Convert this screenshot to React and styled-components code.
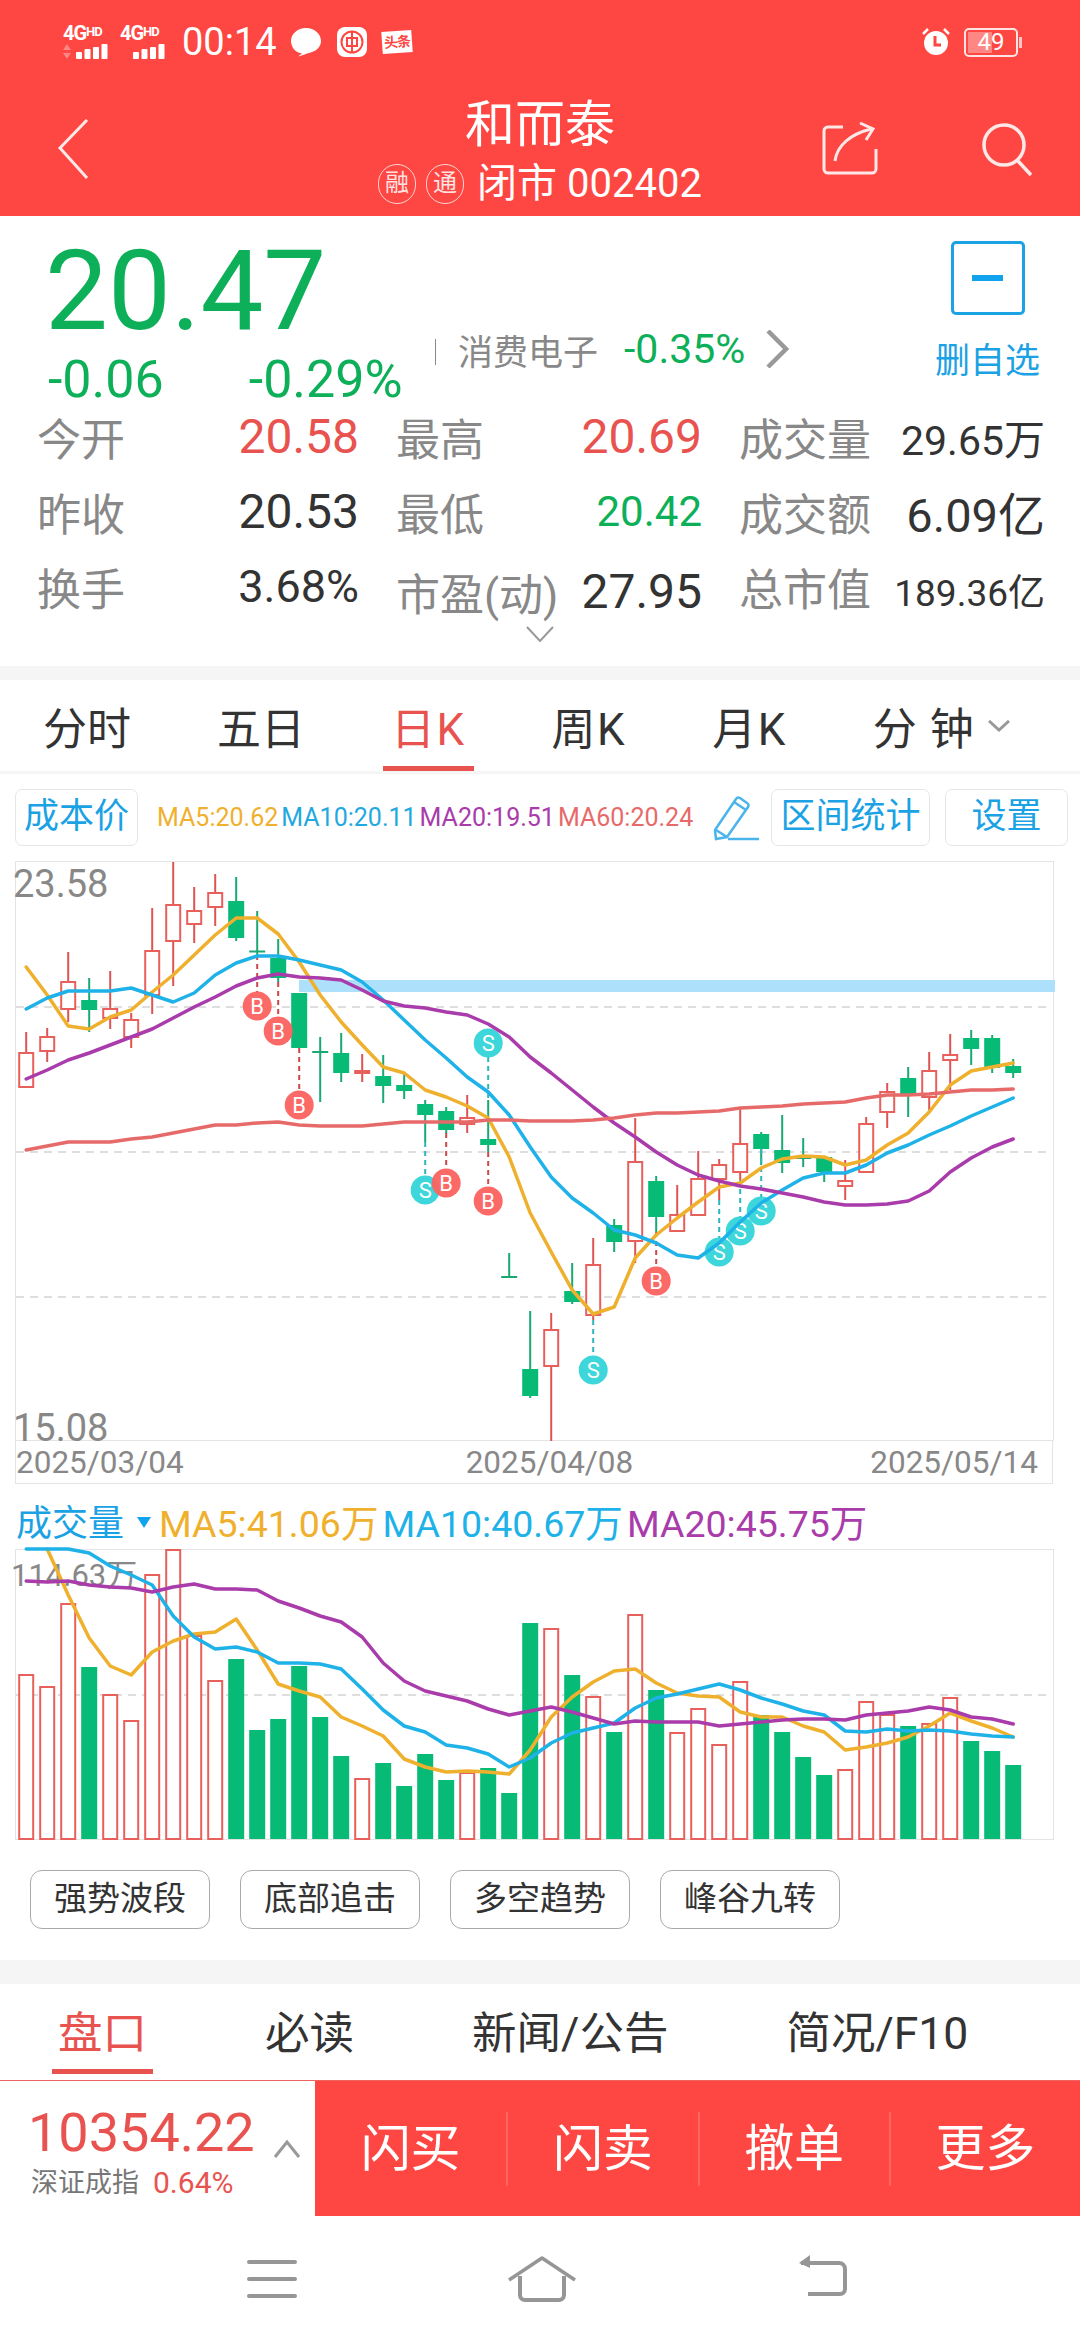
import React from "react";
import styled, { createGlobalStyle } from "styled-components";

const RED = "#fe4743";
const UP = "#e85350";
const DOWN = "#0db058";
const BLUE = "#1ba2e4";
const FONT = `Roboto, "Noto Sans CJK SC", sans-serif`;

const GlobalStyle = createGlobalStyle`
  html, body { margin: 0; padding: 0; background: #fff; }
  body { font-family: ${FONT}; }
  * { box-sizing: border-box; }
`;

const Page = styled.div`
  width: 1080px;
  height: 2340px;
  overflow: hidden;
  background: #fff;
  color: #333;
`;

/* header */
const Header = styled.header`
  height: 216px;
  background: ${RED};
  color: #fff;
`;

const StatusBar = styled.div`
  height: 84px;
  padding: 0 62px 0 63px;
  display: flex;
  align-items: center;
`;

const SignalGroup = styled.div`
  width: 46px;
  margin-right: 11px;
  display: flex;
  flex-direction: column;
  gap: 3px;
`;

const NetText = styled.span`
  font-size: 20px;
  line-height: 15px;
  font-weight: 700;
  white-space: nowrap;
  letter-spacing: -1px;
  & > sup {
    font-size: 13px;
    line-height: 0;
    vertical-align: 4px;
  }
`;

const Clock = styled.span`
  font-size: 38px;
  line-height: 40px;
  margin: 0 13px 0 5px;
`;

const BankIcon = styled.svg`
  margin-left: 15px;
`;

const TinyLogo = styled.span`
  width: 30px;
  height: 22px;
  margin-left: 15px;
  background: #fff;
  color: ${RED};
  font-size: 14px;
  line-height: 22px;
  font-weight: 700;
  text-align: center;
  transform: rotate(-4deg);
  letter-spacing: -1px;
  white-space: nowrap;
`;

const StatusRight = styled.div`
  margin-left: auto;
  display: flex;
  align-items: center;
  gap: 13px;
`;

const Battery = styled.div`
  position: relative;
  width: 54px;
  height: 29px;
  border: 2px solid #ffe4e3;
  border-radius: 5px;
  font-size: 24px;
  line-height: 25px;
  text-align: center;
  &::before {
    content: "";
    position: absolute;
    left: 2px;
    top: 2px;
    bottom: 2px;
    width: 47%;
    background: rgba(255, 255, 255, 0.35);
  }
  &::after {
    content: "";
    position: absolute;
    right: -6px;
    top: 7px;
    width: 3px;
    height: 11px;
    background: rgba(255, 255, 255, 0.7);
  }
`;

const NavBar = styled.div`
  height: 132px;
  padding: 0 44px;
  display: grid;
  grid-template-columns: 1fr auto 1fr;
`;

const NavSide = styled.div`
  display: flex;
  align-items: center;
  justify-content: ${(p) => (p.$right ? "flex-end" : "flex-start")};
  gap: ${(p) => (p.$right ? "101px" : "0")};
  padding: 0 0 2px ${(p) => (p.$right ? "0" : "14px")};
`;

const TitleColumn = styled.div`
  padding-top: 11px;
  text-align: center;
`;

const Title = styled.div`
  font-size: 50px;
  line-height: 60px;
`;

const SubTitle = styled.div`
  margin-top: 8px;
  height: 42px;
  display: flex;
  align-items: center;
  justify-content: center;
  font-size: 40px;
  line-height: 42px;
`;

const Badge = styled.span`
  width: 38px;
  height: 40px;
  margin-right: 10px;
  border: 1px solid rgba(255, 255, 255, 0.75);
  border-radius: 19px;
  font-size: 24px;
  line-height: 37px;
  text-align: center;
  color: #ffe3e2;
`;

const MarketState = styled.span`
  margin-left: 3px;
`;

/* quote */
const Quote = styled.section`
  height: 450px;
`;

const QuoteTop = styled.div`
  height: 183px;
  padding: 25px 40px 0 48px;
  display: flex;
`;

const PriceColumn = styled.div`
  width: 387px;
`;

const Price = styled.div`
  margin-left: -3px;
  font-size: 112px;
  line-height: 100px;
  color: ${DOWN};
`;

const ChangeRow = styled.div`
  margin-top: 10px;
  display: flex;
  gap: 85px;
  font-size: 52px;
  line-height: 58px;
  color: ${DOWN};
`;

const SectorRow = styled.div`
  margin-top: 87px;
  height: 42px;
  display: flex;
  align-items: center;
  font-size: 35px;
  color: #888;
`;

const Pipe = styled.span`
  width: 1px;
  height: 26px;
  margin: 6px 22px 0 0;
  background: #888;
`;

const SectorChange = styled.span`
  margin: 0 20px 0 26px;
  font-size: 41px;
  color: ${DOWN};
`;

const FavColumn = styled.div`
  margin-left: auto;
  width: 105px;
  display: flex;
  flex-direction: column;
  align-items: center;
`;

const FavBox = styled.div`
  width: 74px;
  height: 74px;
  border: 3px solid ${BLUE};
  border-radius: 5px;
  display: flex;
  align-items: center;
  justify-content: center;
  &::after {
    content: "";
    width: 31px;
    height: 6px;
    background: #12a3ee;
  }
`;

const FavLabel = styled.div`
  margin-top: 26px;
  font-size: 35px;
  line-height: 42px;
  color: ${BLUE};
  white-space: nowrap;
`;

const StatGrid = styled.div`
  padding-left: 37px;
  display: grid;
  grid-template-columns: 322px 306px 306px;
  grid-auto-rows: 75px;
  column-gap: 37px;
`;

const Stat = styled.div`
  display: flex;
  align-items: center;
  justify-content: space-between;
  white-space: nowrap;
`;

const StatLabel = styled.span`
  font-size: 44px;
  color: #888;
  transform: translateY(${(p) => p.$shift || 0}px);
`;

const StatValue = styled.span`
  font-size: ${(p) => p.$size || 48}px;
  color: ${(p) => p.$color || "#333"};
  transform: translateY(${(p) => p.$shift || 0}px);
`;

const MoreRow = styled.div`
  display: flex;
  justify-content: center;
  padding: 2px 0 0 0;
  height: 20px;
`;

const Stripe = styled.div`
  height: ${(p) => p.$h}px;
  background: #f5f5f5;
`;

/* tabs */
const TabBar = styled.nav`
  height: ${(p) => p.$h}px;
  padding-left: ${(p) => p.$left}px;
  display: flex;
  gap: ${(p) => p.$gap}px;
  font-size: ${(p) => p.$size}px;
`;

const Tab = styled.div`
  position: relative;
  height: 100%;
  display: flex;
  align-items: center;
  white-space: nowrap;
  letter-spacing: ${(p) => p.$spread || 0}px;
  color: ${(p) => (p.$active ? UP : "#333")};
  ${(p) =>
    p.$active &&
    `&::after {
      content: "";
      position: absolute;
      left: -${p.$under}px;
      right: -${p.$under}px;
      bottom: 0;
      height: 5px;
      background: ${UP};
    }`}
`;

const Caret = styled.svg`
  margin-left: 13px;
`;

/* chart toolbar */
const Toolbar = styled.div`
  height: 87px;
  padding: 15px 12px 15px 15px;
  display: flex;
  align-items: center;
`;

const ToolChip = styled.div`
  width: ${(p) => p.$w}px;
  height: 57px;
  margin-left: ${(p) => p.$ml || 0}px;
  border: 1px solid #e6e6e6;
  border-radius: 7px;
  font-size: 35px;
  line-height: 53px;
  text-align: center;
  color: ${BLUE};
  white-space: nowrap;
`;

const Legend = styled.div`
  margin-left: ${(p) => p.$ml}px;
  display: flex;
  gap: ${(p) => p.$gap}px;
  font-size: ${(p) => p.$size}px;
  white-space: nowrap;
`;

const LegendItem = styled.span`
  color: ${(p) => p.$color};
`;

const PenIcon = styled.svg`
  margin: 0 12px 0 auto;
`;

const ChartBox = styled.div`
  position: relative;
  width: 1039px;
  height: ${(p) => p.$h}px;
  margin-left: 15px;
  border: 1px solid #e4e4e4;
`;

const AxisLabel = styled.span`
  position: absolute;
  left: ${(p) => p.$left}px;
  top: ${(p) => p.$top}px;
  font-size: ${(p) => p.$size}px;
  line-height: 1;
  color: #888;
  white-space: nowrap;
`;

const ChartSvg = styled.svg`
  position: absolute;
  left: -1px;
  top: -1px;
  overflow: visible;
`;

const DateRow = styled.div`
  width: 1038px;
  height: 43px;
  margin-left: 15px;
  border: 1px solid #e4e4e4;
  border-top: 0;
  display: flex;
  align-items: center;
  font-size: 31.5px;
  color: #888;
`;

const DateLabel = styled.span`
  margin-left: ${(p) => p.$ml || 0}px;
`;

const VolumeHead = styled.div`
  height: 65px;
  padding: 7px 0 0 16px;
  display: flex;
  align-items: center;
  white-space: nowrap;
`;

const VolumeTitle = styled.span`
  font-size: 36px;
  color: ${BLUE};
`;

const VolumeArrow = styled.span`
  width: 0;
  height: 0;
  margin: 4px 8px 0 13px;
  border-left: 7px solid transparent;
  border-right: 7px solid transparent;
  border-top: 11px solid #12a3ee;
`;

const StrategyRow = styled.div`
  padding: 30px 0 31px 30px;
  display: flex;
  gap: 30px;
`;

const StrategyChip = styled.div`
  width: 180px;
  height: 59px;
  border: 1px solid #aaa;
  border-radius: 12px;
  font-size: 33px;
  line-height: 55px;
  text-align: center;
`;

/* bottom */
const TradeBar = styled.div`
  height: 136px;
  margin-top: 6px;
  border-top: 1px solid #f0625f;
  display: flex;
`;

const IndexPanel = styled.div`
  width: 315px;
  padding: 25px 0 0 28px;
  position: relative;
`;

const IndexValue = styled.div`
  font-size: 54px;
  line-height: 54px;
  color: ${UP};
`;

const IndexRow = styled.div`
  margin-top: 5px;
  padding-left: 3px;
  display: flex;
  align-items: center;
  gap: 14px;
  font-size: 27px;
  line-height: 36px;
  color: #777;
`;

const IndexChange = styled.span`
  font-size: 30px;
  color: ${UP};
`;

const UpCaret = styled.svg`
  position: absolute;
  left: 274px;
  top: 59px;
`;

const ActionRow = styled.div`
  flex: 1;
  background: ${RED};
  display: grid;
  grid-template-columns: repeat(4, 1fr);
  align-items: center;
`;

const ActionButton = styled.div`
  height: 74px;
  border-left: ${(p) => (p.$first ? "0" : "2px solid rgba(255,255,255,0.17)")};
  font-size: 50px;
  line-height: 74px;
  text-align: center;
  color: #fff;
`;

const SystemNav = styled.div`
  height: 126px;
  padding: 38px 232px 0 247px;
  display: flex;
  justify-content: space-between;
  align-items: flex-start;
`;

const MenuIcon = styled.svg`
  margin-top: 5px;
`;

const HomeIcon = styled.svg`
  margin: 2px 12px 0 0;
`;

/* chart data: x position of a bar, prices are page y values */
const barX = (i) => 26.2 + 21 * i;

// kind, wick top, body top, body bottom, wick bottom
const CANDLES = [
  ["r", 1032, 1053, 1087, 1087], ["r", 1028, 1037, 1051, 1062], ["r", 952, 982, 1009, 1022],
  ["g", 978, 1000, 1010, 1032], ["r", 971, 1009, 1018, 1029], ["r", 1013, 1020, 1037, 1048],
  ["r", 908, 951, 995, 1014], ["r", 862, 905, 941, 986], ["r", 887, 911, 924, 943],
  ["r", 874, 893, 907, 926], ["g", 877, 901, 938, 941], ["g", 911, 950.5, 952.5, 955],
  ["g", 939, 958, 978, 982], ["g", 993, 993, 1048, 1048], ["g", 1037, 1051, 1053, 1102],
  ["g", 1033, 1053, 1073, 1082], ["r", 1054, 1071, 1073, 1082], ["g", 1055, 1076, 1086, 1103],
  ["g", 1073, 1085, 1091, 1099], ["g", 1100, 1104, 1115, 1142], ["g", 1107, 1111, 1130, 1133],
  ["r", 1095, 1118, 1124, 1133], ["g", 1100, 1139, 1145, 1152], ["g", 1253, 1276, 1278, 1278],
  ["g", 1311, 1369, 1396, 1398], ["r", 1313, 1330, 1366, 1441], ["g", 1263, 1291, 1302, 1304],
  ["r", 1238, 1265, 1315, 1320], ["g", 1219, 1225, 1242, 1252], ["r", 1118, 1162, 1241, 1263],
  ["g", 1176, 1181, 1217, 1232], ["r", 1185, 1215, 1231, 1231], ["r", 1151, 1179, 1215, 1215],
  ["r", 1159, 1165, 1179, 1200], ["r", 1107, 1144, 1172, 1180], ["g", 1132, 1134, 1149, 1165],
  ["g", 1115, 1150, 1163, 1173], ["g", 1138, 1156, 1159, 1167], ["g", 1157, 1157, 1172, 1182],
  ["r", 1160, 1181, 1186, 1200], ["r", 1117, 1124, 1172, 1172], ["r", 1083, 1092, 1112, 1128],
  ["g", 1067, 1078, 1094, 1117], ["r", 1052, 1071, 1097, 1110], ["r", 1034, 1055, 1060, 1090],
  ["g", 1030, 1038, 1049, 1065], ["g", 1035, 1038, 1068, 1073], ["g", 1059, 1066, 1073, 1078],
];

// letter, bar index, centre y, dashed line from, dashed line to
const MARKERS = [
  ["B", 11, 1006, 955, 992], ["B", 12, 1031, 982, 1017], ["B", 13, 1105, 1048, 1091],
  ["S", 19, 1190, 1142, 1176], ["B", 20, 1183, 1133, 1169], ["B", 22, 1201, 1152, 1187],
  ["S", 22, 1043, 1057, 1100], ["S", 27, 1370, 1320, 1356], ["B", 30, 1281, 1232, 1267],
  ["S", 33, 1252, 1200, 1238], ["S", 34, 1231, 1180, 1217], ["S", 35, 1211, 1149, 1197],
];

const PRICE_MA = [
  {
    color: "#efb02e",
    ys: [967, 995, 1026, 1029, 1017, 1010, 992, 975, 955, 935, 918, 918, 934, 962, 995, 1022, 1045, 1067, 1073, 1090, 1097, 1106, 1118, 1157, 1213, 1252, 1290, 1314, 1307, 1258, 1235, 1218, 1202, 1187, 1183, 1168, 1159, 1156, 1157, 1165, 1160, 1145, 1133, 1112, 1085, 1071, 1067, 1063],
  },
  {
    color: "#1fb2e8",
    ys: [1009, 998, 991, 991, 991, 988, 995, 1002, 993, 975, 963, 956, 956, 960, 965, 970, 982, 1000, 1020, 1040, 1058, 1077, 1092, 1115, 1147, 1177, 1198, 1213, 1230, 1235, 1243, 1255, 1258, 1243, 1222, 1203, 1190, 1178, 1173, 1173, 1165, 1153, 1145, 1135, 1126, 1116, 1107, 1098],
  },
  {
    color: "#a93bab",
    ys: [1079, 1070, 1060, 1053, 1045, 1037, 1029, 1018, 1007, 997, 986, 978, 974, 977, 978, 980, 990, 1001, 1006, 1008, 1012, 1015, 1024, 1037, 1057, 1073, 1090, 1107, 1123, 1137, 1152, 1165, 1175, 1181, 1186, 1189, 1193, 1197, 1202, 1205, 1205, 1204, 1201, 1191, 1172, 1158, 1147, 1139],
  },
  {
    color: "#e76a6a",
    ys: [1150, 1146, 1142, 1142, 1142, 1139, 1137, 1133, 1129, 1125, 1125, 1123, 1122, 1125, 1126, 1126, 1126, 1124, 1122, 1122, 1122, 1122, 1120, 1120, 1121, 1121, 1121, 1120, 1118, 1115, 1113, 1113, 1112, 1111, 1108, 1107, 1106, 1104, 1103, 1102, 1098, 1095, 1095, 1094, 1092, 1090, 1090, 1089],
  },
];

const VOLUMES = [
  ["r", 1675], ["r", 1687], ["r", 1604], ["g", 1667], ["r", 1695], ["r", 1721], ["r", 1575], ["r", 1550],
  ["r", 1636], ["r", 1681], ["g", 1659], ["g", 1730], ["g", 1719], ["g", 1666], ["g", 1717], ["g", 1756],
  ["r", 1779], ["g", 1763], ["g", 1786], ["g", 1754], ["g", 1780], ["r", 1773], ["g", 1768], ["g", 1793],
  ["g", 1623], ["r", 1629], ["g", 1675], ["r", 1697], ["g", 1732], ["r", 1615], ["g", 1690], ["r", 1733],
  ["r", 1709], ["r", 1745], ["r", 1682], ["g", 1715], ["g", 1732], ["g", 1757], ["g", 1775], ["r", 1770],
  ["r", 1702], ["r", 1715], ["g", 1726], ["r", 1724], ["r", 1698], ["g", 1741], ["g", 1751], ["g", 1765],
];

const VOLUME_MA = [
  {
    color: "#efb02e",
    from: 1,
    ys: [1549, 1595, 1638, 1666, 1675, 1652, 1641, 1634, 1632, 1619, 1650, 1684, 1691, 1697, 1717, 1726, 1736, 1759, 1767, 1772, 1771, 1772, 1774, 1750, 1717, 1697, 1682, 1671, 1669, 1683, 1693, 1696, 1697, 1712, 1717, 1717, 1726, 1732, 1750, 1747, 1743, 1737, 1726, 1713, 1721, 1728, 1737],
  },
  {
    color: "#1fb2e8",
    from: 0,
    ys: [1549, 1549, 1549, 1553, 1566, 1575, 1585, 1616, 1637, 1649, 1647, 1652, 1663, 1663, 1664, 1669, 1689, 1710, 1726, 1732, 1745, 1748, 1754, 1767, 1758, 1743, 1733, 1728, 1723, 1708, 1698, 1694, 1689, 1684, 1690, 1698, 1704, 1711, 1715, 1731, 1732, 1729, 1731, 1730, 1731, 1734, 1736, 1737],
  },
  {
    color: "#a93bab",
    from: 0,
    ys: [1581, 1582, 1581, 1585, 1587, 1588, 1592, 1587, 1584, 1589, 1589, 1590, 1601, 1608, 1616, 1622, 1637, 1663, 1681, 1691, 1696, 1701, 1709, 1715, 1711, 1707, 1712, 1718, 1724, 1721, 1722, 1722, 1722, 1726, 1724, 1722, 1720, 1719, 1719, 1720, 1715, 1713, 1711, 1707, 1710, 1717, 1719, 1724],
  },
];

const STROKE_RED = "#e8605c";
const BODY_GREEN = "#07ba76";
const WICK_GREEN = "#1aa873";

const MaLine = ({ ys, color, from = 0 }) => (
  <polyline
    points={ys.map((y, i) => `${barX(i + from)},${y}`).join(" ")}
    fill="none"
    stroke={color}
    strokeWidth="3.5"
    strokeLinejoin="round"
    strokeLinecap="round"
  />
);

const Candle = ({ data, i }) => {
  const [kind, top, bodyTop, bodyBottom, bottom] = data;
  const x = barX(i);
  const wick = kind === "g" ? WICK_GREEN : "#de5452";
  return (
    <g>
      <line x1={x} x2={x} y1={top} y2={bottom} stroke={wick} strokeWidth="2" />
      {kind === "g" ? (
        <rect x={x - 8} y={bodyTop} width="16" height={bodyBottom - bodyTop} fill={bodyBottom - bodyTop < 4 ? wick : BODY_GREEN} />
      ) : (
        <rect x={x - 7} y={bodyTop} width="14" height={bodyBottom - bodyTop} fill="#fff" stroke={STROKE_RED} strokeWidth="2" />
      )}
    </g>
  );
};

const Marker = ({ data }) => {
  const [letter, i, cy, from, to] = data;
  const x = barX(i);
  const buy = letter === "B";
  return (
    <g>
      <line x1={x} x2={x} y1={from} y2={to} stroke={buy ? "#c9484a" : "#2bb6bd"} strokeWidth="2" strokeDasharray="5 4" />
      <circle cx={x} cy={cy} r="14.5" fill={buy ? "#fb625f" : "#33d4d8"} fillOpacity="0.95" />
      <text x={x} y={cy + 8} textAnchor="middle" fontSize="22" fontFamily="Roboto, sans-serif" fill="#fff">
        {letter}
      </text>
    </g>
  );
};

const DashLine = ({ y }) => (
  <line x1="16" x2="1052" y1={y} y2={y} stroke="#dedede" strokeWidth="2" strokeDasharray="8 6" />
);

const PriceChart = () => (
  <ChartBox $h={580}>
    <AxisLabel $left={-3} $top={3} $size={38}>23.58</AxisLabel>
    <AxisLabel $left={-3} $top={547} $size={38}>15.08</AxisLabel>
    <ChartSvg width="1040" height="580" viewBox="15 861 1040 580">
      <rect x="299" y="980" width="756" height="12" fill="#ade0fb" />
      <DashLine y={1007} />
      <DashLine y={1152} />
      <DashLine y={1297} />
      {CANDLES.map((c, i) => (
        <Candle key={i} data={c} i={i} />
      ))}
      {MARKERS.map((m, i) => (
        <Marker key={i} data={m} />
      ))}
      {PRICE_MA.map((m) => (
        <MaLine key={m.color} ys={m.ys} color={m.color} />
      ))}
    </ChartSvg>
  </ChartBox>
);

const VolumeChart = () => (
  <ChartBox $h={291}>
    <AxisLabel $left={-5} $top={10} $size={31}>114.63万</AxisLabel>
    <ChartSvg width="1040" height="291" viewBox="15 1549 1040 291">
      <DashLine y={1695} />
      {VOLUMES.map(([kind, top], i) =>
        kind === "g" ? (
          <rect key={i} x={barX(i) - 8} y={top} width="16" height={1839 - top} fill={BODY_GREEN} />
        ) : (
          <rect key={i} x={barX(i) - 7} y={top} width="14" height={1839 - top} fill="#fff" stroke={STROKE_RED} strokeWidth="2" />
        )
      )}
      {VOLUME_MA.map((m) => (
        <MaLine key={m.color} ys={m.ys} color={m.color} from={m.from} />
      ))}
    </ChartSvg>
  </ChartBox>
);

const SignalBars = ({ arrows }) => (
  <svg width="46" height="15" viewBox="0 0 46 15">
    {arrows && <path d="M4 0l4 6H0zM4 15l4-6H0z" fill="rgba(255,255,255,0.35)" />}
    <rect x="13" y="8" width="6" height="7" rx="1" fill="#fff" />
    <rect x="21.5" y="5" width="6" height="10" rx="1" fill="#fff" />
    <rect x="30" y="3" width="6" height="12" rx="1" fill="#fff" />
    <rect x="38.5" y="0" width="6" height="15" rx="1" fill="#fff" />
  </svg>
);

const STATS = [
  { label: "今开", value: "20.58", color: UP },
  { label: "最高", value: "20.69", color: UP },
  { label: "成交量", value: "29.65万", size: 41 },
  { label: "昨收", value: "20.53" },
  { label: "最低", value: "20.42", color: DOWN, size: 42 },
  { label: "成交额", value: "6.09亿", size: 47 },
  { label: "换手", value: "3.68%", size: 45 },
  { label: "市盈(动)", value: "27.95", shift: 5 },
  { label: "总市值", value: "189.36亿", size: 37, valueShift: 3 },
];

export default function App() {
  return (
    <Page>
      <GlobalStyle />
      <Header>
        <StatusBar>
          <SignalGroup>
            <NetText>4G<sup>HD</sup></NetText>
            <SignalBars arrows />
          </SignalGroup>
          <SignalGroup>
            <NetText>4G<sup>HD</sup></NetText>
            <SignalBars />
          </SignalGroup>
          <Clock>00:14</Clock>
          <svg width="32" height="30" viewBox="0 0 32 30">
            <path d="M16 1C7.500 1 1 7 1 14s5.500 12 11 12.500L8 29.500c5-1 9-3 11-3.500 7-1.500 12-6 12-12C31 7 24.500 1 16 1z" fill="#fff" />
          </svg>
          <BankIcon width="30" height="30" viewBox="0 0 30 30">
            <rect x="0" y="0" width="30" height="30" rx="8" fill="#fff" />
            <circle cx="15" cy="15" r="10.500" fill="none" stroke={RED} strokeWidth="2" />
            <rect x="10" y="11" width="10" height="8" fill="none" stroke={RED} strokeWidth="2" />
            <line x1="15" x2="15" y1="5" y2="25" stroke={RED} strokeWidth="2" />
          </BankIcon>
          <TinyLogo>头条</TinyLogo>
          <StatusRight>
            <svg width="30" height="30" viewBox="0 0 30 30">
              <circle cx="15" cy="16" r="12" fill="#fff" />
              <path d="M14 9v9h6" fill="none" stroke={RED} strokeWidth="3" />
              <path d="M2 7l5-5M28 7l-5-5" stroke="#fff" strokeWidth="2.500" />
            </svg>
            <Battery>49</Battery>
          </StatusRight>
        </StatusBar>
        <NavBar>
          <NavSide>
            <svg width="32" height="60" viewBox="0 0 32 60">
              <path d="M29 1L2 29l27 30" fill="none" stroke="#ffe8e7" strokeWidth="3" />
            </svg>
          </NavSide>
          <TitleColumn>
            <Title>和而泰</Title>
            <SubTitle>
              <Badge>融</Badge>
              <Badge>通</Badge>
              <MarketState>闭市 002402</MarketState>
            </SubTitle>
          </TitleColumn>
          <NavSide $right>
            <svg width="58" height="56" viewBox="0 0 58 56">
              <path d="M22 6H7a4 4 0 0 0-4 4v38a4 4 0 0 0 4 4h44a4 4 0 0 0 4-4V28" fill="none" stroke="#ffe8e7" strokeWidth="3" />
              <path d="M14 40C16 24 30 13 50 8M39 2l13 6-7 11" fill="none" stroke="#ffe8e7" strokeWidth="3" />
            </svg>
            <svg width="56" height="56" viewBox="0 0 56 56">
              <circle cx="24" cy="24" r="20" fill="none" stroke="#ffe8e7" strokeWidth="3.500" />
              <path d="M38 40l13 14" stroke="#ffe8e7" strokeWidth="3.500" />
            </svg>
          </NavSide>
        </NavBar>
      </Header>

      <Quote>
        <QuoteTop>
          <PriceColumn>
            <Price>20.47</Price>
            <ChangeRow>
              <span>-0.06</span>
              <span>-0.29%</span>
            </ChangeRow>
          </PriceColumn>
          <SectorRow>
            <Pipe />
            <span>消费电子</span>
            <SectorChange>-0.35%</SectorChange>
            <svg width="24" height="38" viewBox="0 0 24 38">
              <path d="M3 1l18 18L3 37" fill="none" stroke="#999" strokeWidth="4.500" />
            </svg>
          </SectorRow>
          <FavColumn>
            <FavBox />
            <FavLabel>删自选</FavLabel>
          </FavColumn>
        </QuoteTop>
        <StatGrid>
          {STATS.map((s) => (
            <Stat key={s.label}>
              <StatLabel $shift={s.shift}>{s.label}</StatLabel>
              <StatValue $size={s.size} $color={s.color} $shift={s.valueShift || s.shift}>
                {s.value}
              </StatValue>
            </Stat>
          ))}
        </StatGrid>
        <MoreRow>
          <svg width="28" height="16" viewBox="0 0 28 16">
            <path d="M1 1l13 14L27 1" fill="none" stroke="#999" strokeWidth="2" />
          </svg>
        </MoreRow>
      </Quote>

      <Stripe $h={14} />
      <TabBar $h={91} $left={43} $gap={86} $size={44}>
        <Tab>分时</Tab>
        <Tab>五日</Tab>
        <Tab $active $under={8} $spread={1.5}>日K</Tab>
        <Tab $spread={1.5}>周K</Tab>
        <Tab $spread={1.5}>月K</Tab>
        <Tab $spread={1}>
          分 钟
          <Caret width="22" height="12" viewBox="0 0 22 12">
            <path d="M1 1l10 9 10-9" fill="none" stroke="#999" strokeWidth="3" />
          </Caret>
        </Tab>
      </TabBar>
      <Stripe $h={3} />

      <Toolbar>
        <ToolChip $w={123}>成本价</ToolChip>
        <Legend $ml={19} $size={25} $gap={3}>
          <LegendItem $color="#efb02e">MA5:20.62</LegendItem>
          <LegendItem $color="#1fa9e0">MA10:20.11</LegendItem>
          <LegendItem $color="#a93bab">MA20:19.51</LegendItem>
          <LegendItem $color="#e76a6a">MA60:20.24</LegendItem>
        </Legend>
        <PenIcon width="46" height="46" viewBox="0 0 46 46">
          <path d="M2 35L23 4a3 3 0 0 1 4-1l7 5a3 3 0 0 1 1 4L14 42 3 44z" fill="none" stroke="#4bb4ea" strokeWidth="2.500" />
          <path d="M21 7l12 8M3 35l11 7M15 44h31" fill="none" stroke="#4bb4ea" strokeWidth="2.500" />
        </PenIcon>
        <ToolChip $w={159}>区间统计</ToolChip>
        <ToolChip $w={123} $ml={15}>设置</ToolChip>
      </Toolbar>

      <PriceChart />
      <DateRow>
        <DateLabel>2025/03/04</DateLabel>
        <DateLabel $ml={282}>2025/04/08</DateLabel>
        <DateLabel $ml={237}>2025/05/14</DateLabel>
      </DateRow>

      <VolumeHead>
        <VolumeTitle>成交量</VolumeTitle>
        <VolumeArrow />
        <Legend $ml={0} $size={37.5} $gap={4}>
          <LegendItem $color="#efb02e">MA5:41.06万</LegendItem>
          <LegendItem $color="#1fb2e8">MA10:40.67万</LegendItem>
          <LegendItem $color="#a93bab">MA20:45.75万</LegendItem>
        </Legend>
      </VolumeHead>
      <VolumeChart />

      <StrategyRow>
        <StrategyChip>强势波段</StrategyChip>
        <StrategyChip>底部追击</StrategyChip>
        <StrategyChip>多空趋势</StrategyChip>
        <StrategyChip>峰谷九转</StrategyChip>
      </StrategyRow>

      <Stripe $h={24} />
      <TabBar $h={90} $left={58} $gap={118} $size={44.5}>
        <Tab $active $under={6}>盘口</Tab>
        <Tab>必读</Tab>
        <Tab>新闻/公告</Tab>
        <Tab>简况/F10</Tab>
      </TabBar>

      <TradeBar>
        <IndexPanel>
          <IndexValue>10354.22</IndexValue>
          <IndexRow>
            <span>深证成指</span>
            <IndexChange>0.64%</IndexChange>
          </IndexRow>
          <UpCaret width="26" height="18" viewBox="0 0 26 18">
            <path d="M1 17L13 2l12 15" fill="none" stroke="#999" strokeWidth="3" />
          </UpCaret>
        </IndexPanel>
        <ActionRow>
          <ActionButton $first>闪买</ActionButton>
          <ActionButton>闪卖</ActionButton>
          <ActionButton>撤单</ActionButton>
          <ActionButton>更多</ActionButton>
        </ActionRow>
      </TradeBar>

      <SystemNav>
        <MenuIcon width="50" height="40" viewBox="0 0 50 40">
          <path d="M2 3h46M2 20h46M2 37h46" stroke="#969696" strokeWidth="4" strokeLinecap="round" />
        </MenuIcon>
        <HomeIcon width="70" height="46" viewBox="0 0 70 46">
          <path d="M2 24L35 2l33 22" fill="none" stroke="#969696" strokeWidth="3.500" strokeLinejoin="round" />
          <path d="M13 20v19a5 5 0 0 0 5 5h34a5 5 0 0 0 5-5V20" fill="none" stroke="#969696" strokeWidth="4" />
        </HomeIcon>
        <svg width="50" height="42" viewBox="0 0 50 42">
          <path d="M3 9h38a6 6 0 0 1 6 6v20a5 5 0 0 1-5 5H10" fill="none" stroke="#969696" strokeWidth="4" />
          <path d="M12 1L1 9l11 5z" fill="#969696" />
        </svg>
      </SystemNav>
    </Page>
  );
}
